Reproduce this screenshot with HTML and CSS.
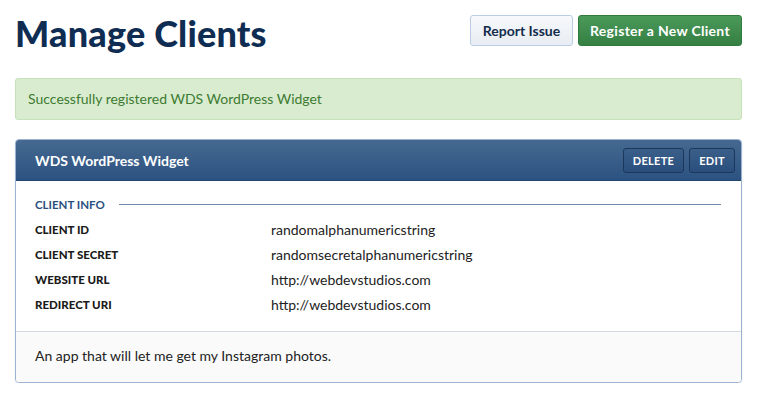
FILE: index.html
```html
<!DOCTYPE html>
<html lang="en">

<head>
    <title>Manage Clients</title>
    <meta charset="UTF-8">
    <link rel="stylesheet" href="styles.css">
</head>

<body>
    <div class="mc-page">
        <div class="mc-header">
            <h1>Manage Clients</h1>
            <div class="mc-actions">
                <a class="btn btn-light" href="#">Report Issue</a>
                <a class="btn btn-green" href="#">Register a New Client</a>
            </div>
        </div>

        <div class="mc-alert">Successfully registered WDS WordPress Widget</div>

        <div class="mc-panel">
            <div class="mc-panel-head">
                <h2>WDS WordPress Widget</h2>
                <div class="mc-panel-tools">
                    <a class="btn-dark" href="#">DELETE</a>
                    <a class="btn-dark" href="#">EDIT</a>
                </div>
            </div>
            <div class="mc-panel-body">
                <div class="mc-section">
                    <span>CLIENT INFO</span>
                </div>
                <dl class="mc-info">
                    <dt>CLIENT ID</dt>
                    <dd>randomalphanumericstring</dd>
                    <dt>CLIENT SECRET</dt>
                    <dd>randomsecretalphanumericstring</dd>
                    <dt>WEBSITE URL</dt>
                    <dd>http://webdevstudios.com</dd>
                    <dt>REDIRECT URI</dt>
                    <dd>http://webdevstudios.com</dd>
                </dl>
            </div>
            <div class="mc-panel-foot">
                An app that will let me get my Instagram photos.
            </div>
        </div>
    </div>
</body>

</html>
```

FILE: styles.css
```css
* {
    box-sizing: border-box;
    font-family: 'Lato', 'Noto Sans', sans-serif;
}

body {
    margin: 0;
    background-color: #ffffff;
    color: #222222;
}

.mc-page {
    padding: 15px 15px 0 15px;
    box-sizing: content-box;
    width: 727px;
}

.mc-header {
    display: flex;
    align-items: flex-start;
    justify-content: space-between;
    height: 63px;
}

.mc-header h1 {
    margin: 0;
    font-size: 36px;
    line-height: 36px;
    font-weight: 900;
    color: #0f2d52;
    letter-spacing: 0.2px;
}

.mc-actions {
    display: flex;
    gap: 5px;
}

.btn {
    display: block;
    height: 31px;
    line-height: 29px;
    font-size: 14px;
    font-weight: bold;
    text-decoration: none;
    text-align: center;
    border-radius: 3px;
}

.btn-light {
    width: 103px;
    color: #142c4d;
    background: linear-gradient(#f7f9fb, #e8edf3);
    border: 1px solid #b9cde6;
}

.btn-green {
    width: 164px;
    color: #ffffff;
    background: linear-gradient(#4a9a5a, #357f43);
    border: 1px solid #2f7a3c;
    letter-spacing: 0.3px;
}

.mc-alert {
    height: 42px;
    line-height: 40px;
    padding: 0 12px;
    font-size: 14px;
    color: #3d7b31;
    background-color: #d9ecd0;
    border: 1px solid #c7e1ba;
    border-radius: 3px;
}

.mc-panel {
    margin-top: 19px;
    border: 1px solid #9bb3d1;
    border-radius: 4px;
    overflow: hidden;
    box-shadow: 0 1px 2px rgba(0, 0, 0, 0.12);
}

.mc-panel-head {
    display: flex;
    align-items: center;
    justify-content: space-between;
    height: 41px;
    padding: 0 6px 0 19px;
    background: linear-gradient(#45698f, #2c5282);
    border-bottom: 1px solid #23446f;
}

.mc-panel-head h2 {
    margin: 0;
    font-size: 14px;
    font-weight: bold;
    color: #ffffff;
}

.mc-panel-tools {
    display: flex;
    gap: 5px;
}

.btn-dark {
    display: block;
    height: 25px;
    line-height: 23px;
    padding: 0 9px;
    font-size: 11px;
    font-weight: bold;
    color: #ffffff;
    text-decoration: none;
    background: linear-gradient(#3a5f89, #2b4f7d);
    border: 1px solid #1b375b;
    border-radius: 3px;
    letter-spacing: 0.3px;
}

.mc-panel-body {
    padding: 17px 20px 18px 19px;
    border-bottom: 1px solid #d4d9df;
}

.mc-section {
    display: flex;
    align-items: center;
    gap: 14px;
    font-size: 11.5px;
    font-weight: bold;
    color: #2b5080;
}

.mc-section:after {
    content: "";
    flex: 1;
    border-top: 1px solid #6f88a6;
}

.mc-info {
    display: grid;
    grid-template-columns: 236px 1fr;
    row-gap: 8px;
    margin: 10px 0 0 0;
    line-height: 17px;
}

.mc-info dt {
    font-size: 11.5px;
    font-weight: 900;
    color: #1a1a1a;
}

.mc-info dd {
    margin: 0;
    font-size: 14px;
    color: #222222;
}

.mc-panel-foot {
    height: 50px;
    line-height: 48px;
    padding: 0 19px;
    font-size: 14px;
    color: #222222;
    background-color: #fafafa;
}
```
